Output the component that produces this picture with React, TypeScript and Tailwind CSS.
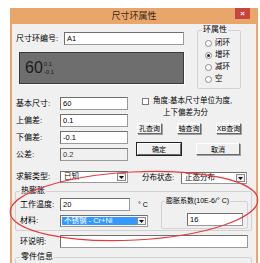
import React from 'react';

const FONT = "font-['Liberation_Sans','Noto_Sans_CJK_SC',sans-serif]";

function Box({ className, children, disabled }: { className: string; children?: React.ReactNode; disabled?: boolean }) {
  return (
    <div
      className={`flex h-[13px] items-center overflow-hidden whitespace-nowrap border border-[#9a9a9a] border-l-[#6f6f6f] border-t-[#6f6f6f] px-[2px] text-[7.5px] leading-none ${
        disabled ? 'bg-[#f0f0f0] text-[#333]' : 'bg-white text-black'
      } ${className}`}
    >
      {children}
    </div>
  );
}

function Arrow() {
  return (
    <div className="flex w-[9px] items-center justify-center border border-[#8a8a8a] bg-[#f0f0f0]">
      <svg width="5" height="3" viewBox="0 0 5 3">
        <polygon points="0,0 5,0 2.5,3" fill="#111" />
      </svg>
    </div>
  );
}

function Combo({ className, value, selected }: { className: string; value: string; selected?: boolean }) {
  return (
    <div className={`flex h-[12px] items-stretch border border-[#9a9a9a] border-l-[#6f6f6f] border-t-[#6f6f6f] bg-white p-px text-[7.5px] leading-none ${className}`}>
      <div className={`flex flex-1 items-center whitespace-nowrap px-[2px] ${selected ? 'bg-[#3399ff] text-white' : 'text-black'}`}>{value}</div>
      <Arrow />
    </div>
  );
}

function Btn({ className, children, primary }: { className: string; children: React.ReactNode; primary?: boolean }) {
  return (
    <div
      className={`flex items-center justify-center whitespace-nowrap border border-b-[#6a6a6a] border-l-white border-r-[#6a6a6a] border-t-white bg-[#f0f0f0] text-[7px] leading-none text-black ${
        primary ? 'outline outline-1 outline-[#222]' : 'shadow-[1px_1px_0_#a0a0a0]'
      } ${className}`}
    >
      {children}
    </div>
  );
}

function Radio({ label, checked }: { label: string; checked?: boolean }) {
  return (
    <div className="flex h-[12px] items-center">
      <span className="ml-[7px] flex h-[7px] w-[7px] items-center justify-center rounded-full border border-[#8a8a8a] bg-white">
        {checked ? <span className="h-[3px] w-[3px] rounded-full bg-[#222]" /> : null}
      </span>
      <span className="ml-[3px] text-[7.5px] leading-none">{label}</span>
    </div>
  );
}

function Row({ label, children, className = '' }: { label: string; children: React.ReactNode; className?: string }) {
  return (
    <div className={`flex items-center ${className}`}>
      <span className="w-[44px] whitespace-nowrap text-[8px] leading-none">{label}</span>
      {children}
    </div>
  );
}

export default function App() {
  return (
    <div className={`relative h-[263px] w-[260px] overflow-hidden bg-white text-black ${FONT}`}>
      <div className="ml-[10px] mt-[8px] flex h-[255px] w-[248px] flex-col bg-[#e9a66b] px-[2px]">
        {/* title bar */}
        <div className="flex h-[16px] shrink-0 items-start">
          <div className="w-[21px]" />
          <div className="flex h-[16px] flex-1 items-center justify-center text-[9px] leading-none text-[#3a2a1c]">尺寸环属性</div>
          <div className="mr-[6px] flex h-[11px] w-[15px] items-center justify-center bg-[#c8443e] text-[8px] font-bold leading-none text-white">×</div>
        </div>

        {/* client */}
        <div className="flex-1 overflow-hidden bg-[#f0f0f0] pt-px">
          {/* section A */}
          <div className="flex items-start">
            <div className="ml-[4px] mt-[7px] flex flex-col">
              <div className="flex items-center">
                <span className="w-[48px] whitespace-nowrap text-[8px] leading-none">尺寸环编号:</span>
                <Box className="w-[120px]">A1</Box>
              </div>
              <div className="ml-[3px] mt-[7px] flex h-[32px] w-[165px] items-center border border-[#3a3a3a] bg-[#6e6e6e] pl-[5px] text-[#1c1c1c] shadow-[1px_1px_0_#ffffff]">
                <span className="text-[16px] leading-none">60</span>
                <div className="ml-px flex flex-col text-[6px] leading-[8px]">
                  <span>0.1</span>
                  <span>-0.1</span>
                </div>
              </div>
            </div>
            <fieldset className="ml-[13px] w-[44px] rounded-[2px] border border-[#d2d2d2] pb-[3px]">
              <legend className="ml-[4px] px-px text-[8px] leading-[10px]">环属性</legend>
              <div className="mt-[2px] flex flex-col">
                <Radio label="闭环" />
                <Radio label="增环" checked />
                <Radio label="减环" />
                <Radio label="空" />
              </div>
            </fieldset>
          </div>

          {/* section B */}
          <div className="mt-[7px] flex items-start">
            <div className="ml-[4px] flex flex-col">
              <Row label="基本尺寸:" className="mt-px">
                <Box className="w-[68px]">60</Box>
              </Row>
              <Row label="上偏差:" className="mt-[4px]">
                <Box className="w-[68px]">0.1</Box>
              </Row>
              <Row label="下偏差:" className="mt-[4px]">
                <Box className="w-[68px]">-0.1</Box>
              </Row>
              <Row label="公差:" className="mt-[4px]">
                <Box className="w-[68px]" disabled>0.2</Box>
              </Row>
              <Row label="求解类型:" className="mt-[10px]">
                <Combo className="w-[68px]" value="已知" />
              </Row>
            </div>

            <div className="ml-[9px] flex w-[111px] flex-col text-[7.5px] leading-none">
              <div className="flex h-[10px] items-center">
                <span className="ml-[5px] h-[7px] w-[7px] border border-[#7a7a7a] bg-white" />
                <span className="ml-[4px] whitespace-nowrap">角度:基本尺寸单位为度,</span>
              </div>
              <div className="mt-[2px] flex h-[10px] items-center pl-[26px]">上下偏差为分</div>
              <div className="mt-[5px] flex">
                <Btn className="h-[11px] w-[25px]">孔查询</Btn>
                <Btn className="ml-[15px] h-[11px] w-[24px]">轴查询</Btn>
                <Btn className="ml-[15px] h-[11px] w-[25px]">XB查询</Btn>
              </div>
              <div className="mt-[9px] flex">
                <Btn className="h-[12px] w-[44px]" primary>确定</Btn>
                <Btn className="ml-[15px] h-[12px] w-[44px]">取消</Btn>
              </div>
              <div className="mt-[17px] flex items-center">
                <span className="ml-[5px] w-[39px] whitespace-nowrap">分布状态:</span>
                <Combo className="w-[66px]" value="正态分布" />
              </div>
            </div>
          </div>

          {/* section C: 热膨胀 */}
          <fieldset className="ml-[3px] mt-[2px] w-[237px] rounded-[2px] border border-[#d2d2d2] pb-px">
            <legend className="ml-[4px] px-px text-[8px] leading-[10px]">热膨胀</legend>
            <div className="flex items-start">
              <div className="ml-[4px] flex w-[128px] flex-col">
                <div className="mt-[2px] flex items-center">
                  <span className="w-[40px] whitespace-nowrap text-[8px] leading-none">工作温度:</span>
                  <Box className="w-[70px]">20</Box>
                  <span className="ml-[8px] whitespace-nowrap text-[7px] leading-none">° C</span>
                </div>
                <div className="mt-[4px] flex items-center">
                  <span className="w-[40px] whitespace-nowrap text-[8px] leading-none">材料:</span>
                  <Combo className="w-[88px]" value="不锈钢 - Cr+Ni" selected />
                </div>
              </div>
              <fieldset className="ml-[13px] w-[87px] rounded-[2px] border border-[#d2d2d2] pb-[2px]">
                <legend className="ml-[3px] whitespace-nowrap px-px text-[7px] leading-[10px]">膨胀系数(10E-6/° C)</legend>
                <Box className="ml-[25px] mt-[7px] w-[56px]">16</Box>
              </fieldset>
            </div>
          </fieldset>

          {/* section D */}
          <div className="ml-[8px] mt-[4px] flex items-center">
            <span className="w-[40px] whitespace-nowrap text-[8px] leading-none">环说明:</span>
            <Box className="w-[188px]" />
          </div>

          {/* section E */}
          <fieldset className="ml-[3px] mt-[4px] h-[40px] w-[237px] rounded-[2px] border border-[#d2d2d2]">
            <legend className="ml-[4px] px-px text-[8px] leading-[10px]">零件信息</legend>
          </fieldset>
        </div>
      </div>

      {/* red annotation */}
      <svg className="pointer-events-none absolute inset-0" width="260" height="263" viewBox="0 0 260 263">
        <ellipse cx="134" cy="206" rx="124" ry="34" transform="rotate(-3 134 206)" fill="none" stroke="#e63a3f" strokeWidth="1.1" />
      </svg>
    </div>
  );
}
